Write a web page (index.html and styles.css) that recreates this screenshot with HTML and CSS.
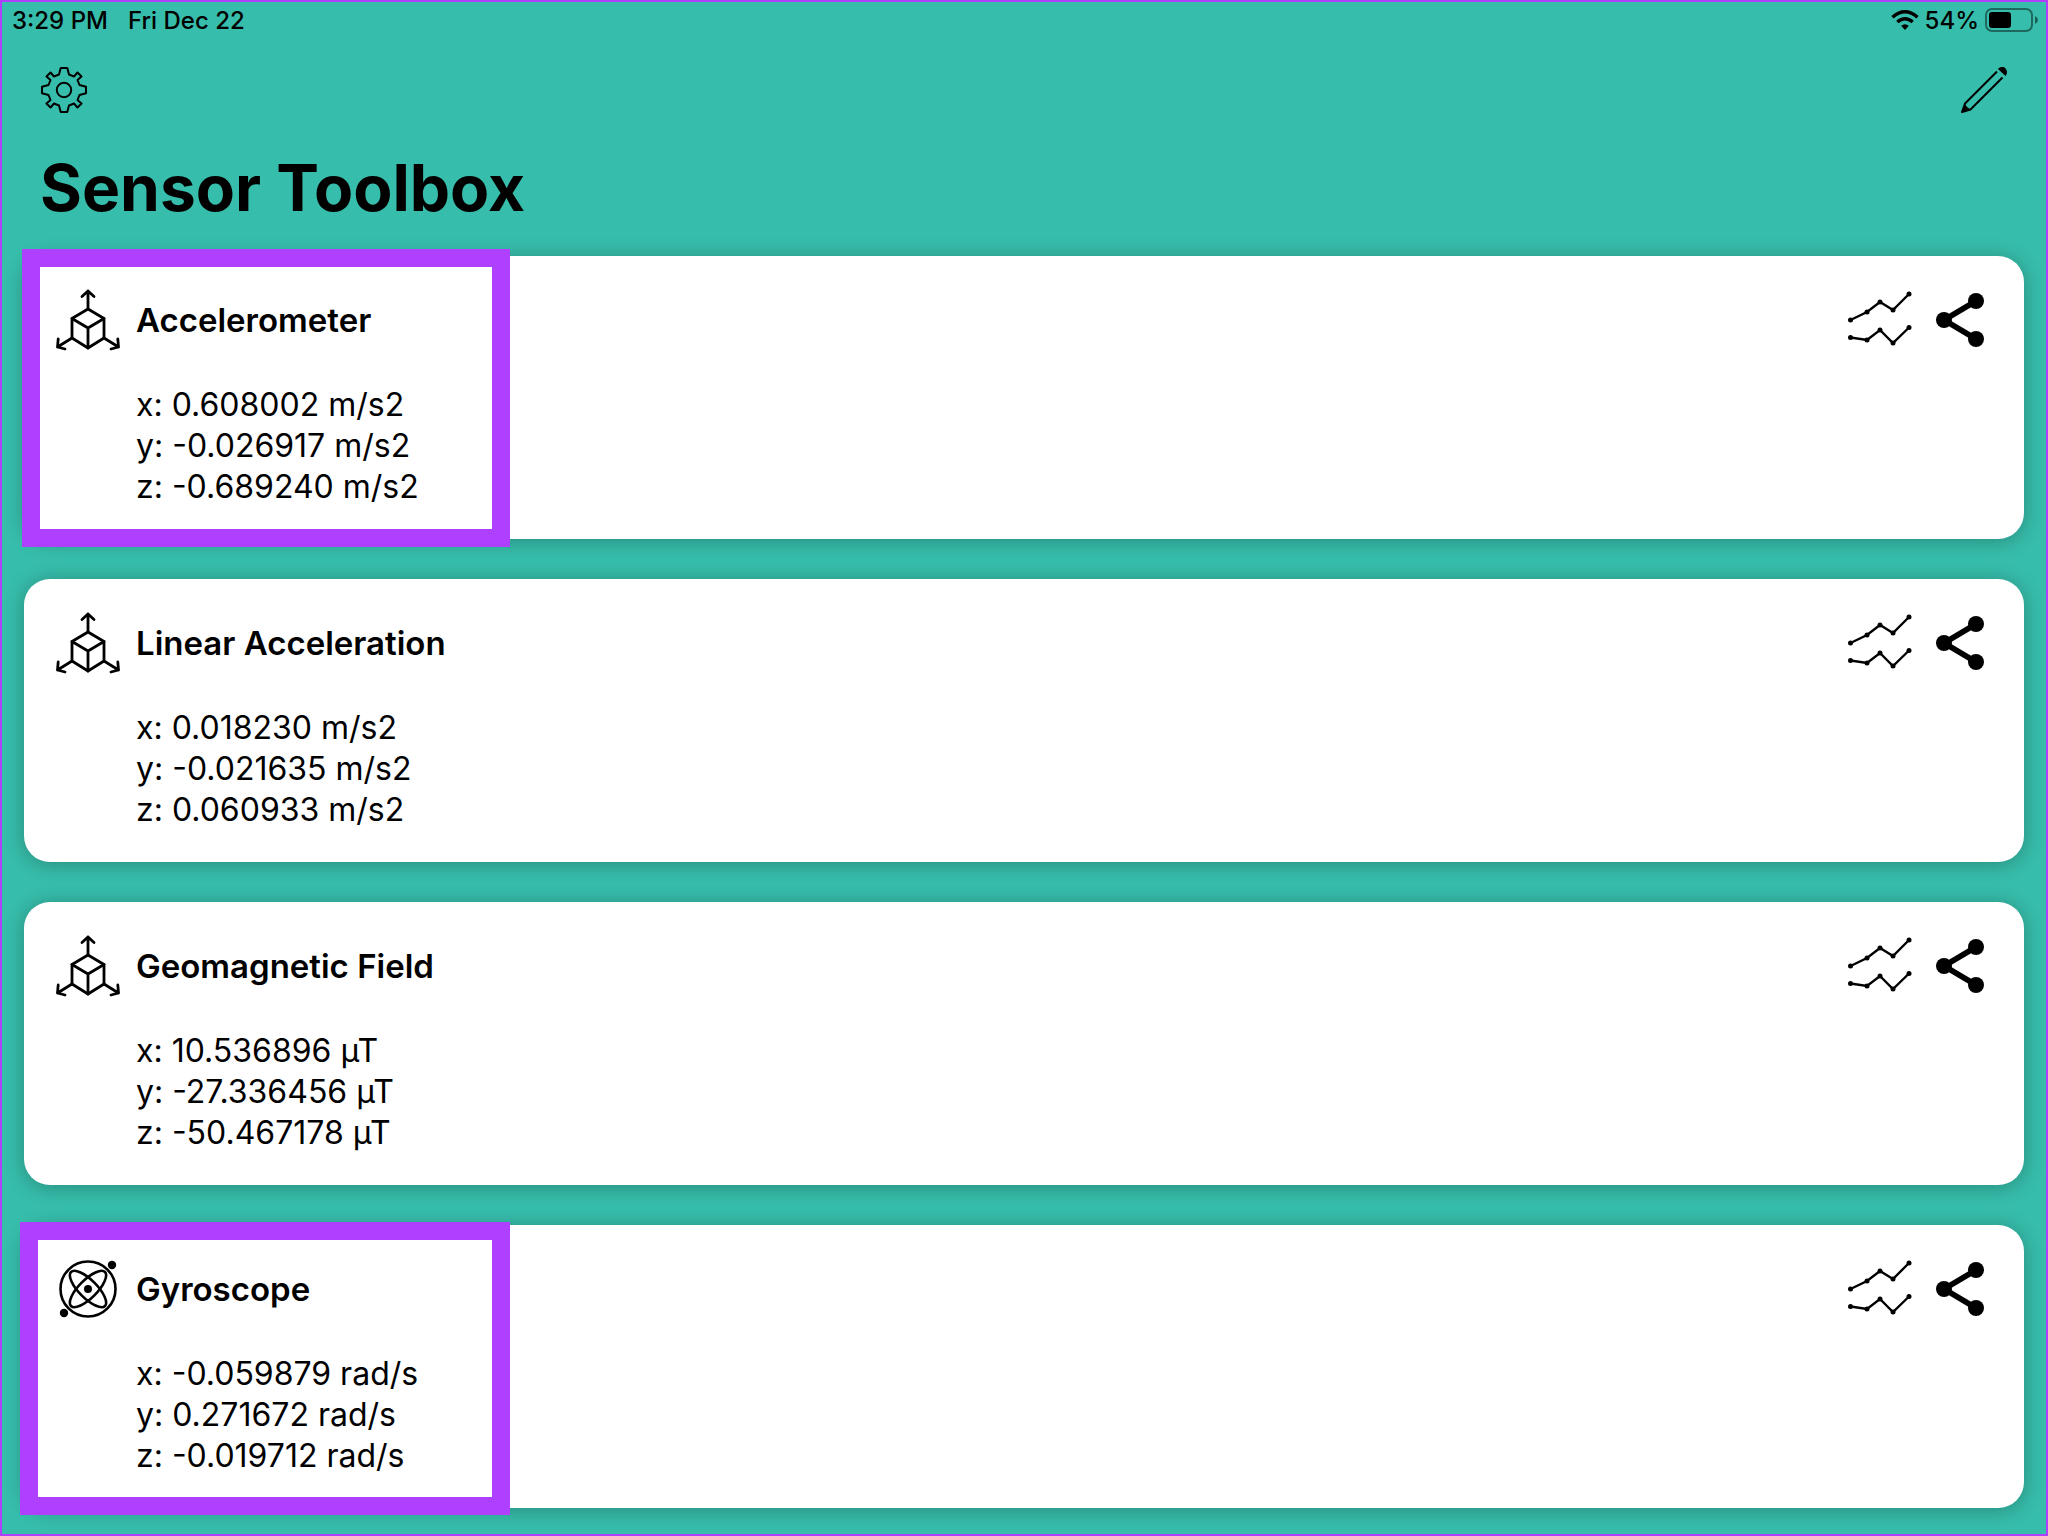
FILE: index.html
```
<!DOCTYPE html>
<html lang="en">

<head>
    <meta charset="UTF-8" />
    <meta name="viewport" content="width=device-width, initial-scale=1.0" />
    <title>Sensor Toolbox</title>
    <link rel="stylesheet" href="styles.css">
</head>

<body>
    <!-- Shared icons -->
    <svg class="sprite" aria-hidden="true">
        <symbol id="icon-axes" viewBox="0 0 64 64">
            <g fill="none" stroke="currentColor" stroke-width="2.8" stroke-linejoin="round" stroke-linecap="round">
                <path d="M32 21 L48 30.5 V50 L32 60 L16 50 V30.5 Z" />
                <path d="M16 30.5 L32 40 L48 30.5 M32 40 V60" />
                <path d="M32 21 V3 M26 8.5 L32 3 L38 8.5" />
                <path d="M16 50 L1.5 59 M2.2 51 L1.5 59 L9 61" />
                <path d="M48 50 L62.5 59 M61.8 51 L62.5 59 L55 61" />
            </g>
        </symbol>
        <symbol id="icon-gyro" viewBox="0 0 64 64">
            <g fill="none" stroke="currentColor" stroke-width="2.6">
                <circle cx="32" cy="32" r="27.5" />
                <ellipse cx="32" cy="32" rx="24" ry="9" transform="rotate(45 32 32)" />
                <ellipse cx="32" cy="32" rx="24" ry="9" transform="rotate(-45 32 32)" />
            </g>
            <circle cx="32" cy="32" r="4" />
            <circle cx="56" cy="8" r="4.2" />
            <circle cx="8" cy="56" r="4.2" />
        </symbol>
        <symbol id="icon-chart" viewBox="0 0 64 64">
            <g fill="none" stroke="currentColor" stroke-width="2.4">
                <path d="M2.5 32 L19 24 L32 14 L45 22 L61 6" />
                <path d="M2.5 49.5 L19 52 L32 42 L45 55 L61 39.5" />
            </g>
            <circle cx="2.5" cy="32" r="2.5" />
            <circle cx="19" cy="24" r="2.5" />
            <circle cx="32" cy="14" r="2.5" />
            <circle cx="45" cy="22" r="2.5" />
            <circle cx="61" cy="6" r="2.5" />
            <circle cx="2.5" cy="49.5" r="2.5" />
            <circle cx="19" cy="52" r="2.5" />
            <circle cx="32" cy="42" r="2.5" />
            <circle cx="45" cy="55" r="2.5" />
            <circle cx="61" cy="39.5" r="2.5" />
        </symbol>
        <symbol id="icon-share" viewBox="0 0 64 64">
            <path d="M48 13 L16 32 L48 51" fill="none" stroke="currentColor" stroke-width="5.6" />
            <circle cx="16" cy="32" r="8" />
            <circle cx="48" cy="13" r="8" />
            <circle cx="48" cy="51" r="8" />
        </symbol>
    </svg>

    <div class="app">
        <div class="status-bar">
            <span>3:29 PM</span>
            <span>Fri Dec 22</span>
            <div class="status-right">
                <svg width="28" height="20" viewBox="0 0 28 20" aria-label="Wi-Fi">
                    <g fill="none" stroke="currentColor" stroke-width="3.4">
                        <path d="M1.5 7.2 Q14 -3.6 26.5 7.2" />
                        <path d="M6.3 12 Q14 5.4 21.7 12" />
                    </g>
                    <path d="M10.2 15.8 Q14 12.6 17.8 15.8 L14 20 Z" />
                </svg>
                <span>54%</span>
                <svg width="55" height="24" viewBox="1 0 55 24" aria-label="Battery">
                    <rect class="battery-shell" x="2" y="1" width="46" height="22" rx="6" />
                    <rect x="5" y="4" width="22" height="16" rx="3" />
                    <path class="battery-tip" d="M51 8 Q54 9.5 54 12 Q54 14.5 51 16 Z" />
                </svg>
            </div>
        </div>

        <header>
            <div class="toolbar">
                <button type="button" aria-label="Settings">
                    <svg width="48" height="48" viewBox="0 0 48 48">
                        <g fill="none" stroke="currentColor" stroke-width="2" stroke-linejoin="round">
                            <path d="M20.7 2 H27.3 L29 8.5 L34 10.5 L37.5 6.5 L41.5 10.5 L37.5 14 L39.5 19 L46 20.7 V27.3 L39.5 29 L37.5 34 L41.5 37.5 L37.5 41.5 L34 37.5 L29 39.5 L27.3 46 H20.7 L19 39.5 L14 37.5 L10.5 41.5 L6.5 37.5 L10.5 34 L8.5 29 L2 27.3 V20.7 L8.5 19 L10.5 14 L6.5 10.5 L10.5 6.5 L14 10.5 L19 8.5 Z" />
                            <circle cx="24" cy="24" r="7.2" />
                        </g>
                    </svg>
                </button>
                <button type="button" aria-label="Edit">
                    <svg width="48" height="48" viewBox="0 0 48 48">
                        <path d="M37 5.5 L5 37.5 L2 46 L10.5 43.5 L42.5 11.5" fill="none" stroke="currentColor" stroke-width="2" stroke-linejoin="round" />
                        <path d="M5 38 L7 41 L10.5 43.5 L1.5 46.5 Z" />
                        <path d="M38 3 C40 0.5 44 0.5 45.5 2.5 C47.5 4.5 47.5 7.5 45.5 10 Z" />
                    </svg>
                </button>
            </div>
            <h1>Sensor Toolbox</h1>
        </header>

        <main>
            <section class="card highlight highlight-first">
                <div class="card-header">
                    <svg class="icon"><use href="#icon-axes" /></svg>
                    <h2>Accelerometer</h2>
                    <button type="button" aria-label="Show chart"><svg class="icon"><use href="#icon-chart" /></svg></button>
                    <button type="button" aria-label="Share"><svg class="icon"><use href="#icon-share" /></svg></button>
                </div>
                <ul>
                    <li>x: 0.608002 m/s2</li>
                    <li>y: -0.026917 m/s2</li>
                    <li>z: -0.689240 m/s2</li>
                </ul>
            </section>

            <section class="card">
                <div class="card-header">
                    <svg class="icon"><use href="#icon-axes" /></svg>
                    <h2>Linear Acceleration</h2>
                    <button type="button" aria-label="Show chart"><svg class="icon"><use href="#icon-chart" /></svg></button>
                    <button type="button" aria-label="Share"><svg class="icon"><use href="#icon-share" /></svg></button>
                </div>
                <ul>
                    <li>x: 0.018230 m/s2</li>
                    <li>y: -0.021635 m/s2</li>
                    <li>z: 0.060933 m/s2</li>
                </ul>
            </section>

            <section class="card">
                <div class="card-header">
                    <svg class="icon"><use href="#icon-axes" /></svg>
                    <h2>Geomagnetic Field</h2>
                    <button type="button" aria-label="Show chart"><svg class="icon"><use href="#icon-chart" /></svg></button>
                    <button type="button" aria-label="Share"><svg class="icon"><use href="#icon-share" /></svg></button>
                </div>
                <ul>
                    <li>x: 10.536896 µT</li>
                    <li>y: -27.336456 µT</li>
                    <li>z: -50.467178 µT</li>
                </ul>
            </section>

            <section class="card highlight highlight-last">
                <div class="card-header">
                    <svg class="icon"><use href="#icon-gyro" /></svg>
                    <h2>Gyroscope</h2>
                    <button type="button" aria-label="Show chart"><svg class="icon"><use href="#icon-chart" /></svg></button>
                    <button type="button" aria-label="Share"><svg class="icon"><use href="#icon-share" /></svg></button>
                </div>
                <ul>
                    <li>x: -0.059879 rad/s</li>
                    <li>y: 0.271672 rad/s</li>
                    <li>z: -0.019712 rad/s</li>
                </ul>
            </section>
        </main>
    </div>
</body>

</html>
```
FILE: styles.css
```
*,
*::after {
    box-sizing: border-box;
}

body {
    font-family: Inter, 'Liberation Sans', sans-serif;
    background: #37bdab;
    color: #000;
    margin: 0;
}

h1,
h2,
ul {
    margin: 0;
    padding: 0;
}

svg {
    display: block;
    fill: currentColor;
}

button {
    padding: 0;
    border: none;
    background: none;
    color: inherit;
    cursor: pointer;
}

.sprite {
    display: none;
}

.app {
    min-height: 100vh;
    border: 2px solid #b040ff;
}

.status-bar {
    display: flex;
    align-items: center;
    gap: 20px;
    height: 36px;
    padding: 0 6px 0 10px;
    font-size: 24px;
    font-weight: 500;
}

.status-right {
    display: flex;
    align-items: center;
    gap: 6px;
    margin-left: auto;
}

.battery-shell {
    fill: none;
    stroke: #000;
    stroke-width: 2;
    opacity: 0.45;
}

.battery-tip {
    opacity: 0.5;
}

header {
    padding: 28px 38px;
}

.toolbar {
    display: flex;
    justify-content: space-between;
    margin-bottom: 34px;
}

h1 {
    font-size: 64px;
    font-weight: 700;
    line-height: 80px;
}

main {
    display: flex;
    flex-direction: column;
    gap: 40px;
    padding: 0 22px 26px;
}

.card {
    position: relative;
    padding: 32px;
    background: #fff;
    border-radius: 26px;
    box-shadow: 0 2px 20px rgba(0, 0, 0, 0.28);
}

.card-header {
    display: flex;
    align-items: center;
    gap: 16px;
    margin-bottom: 32px;
}

.icon {
    width: 64px;
    height: 64px;
}

h2 {
    flex: 1;
    font-size: 33px;
    font-weight: 600;
}

ul {
    list-style-type: none;
    margin-left: 80px;
    font-size: 32px;
    line-height: 41px;
}

/* Purple frame drawn over the left part of a card */
.highlight::after {
    content: '';
    position: absolute;
    border: 18px solid #b040ff;
    pointer-events: none;
}

.highlight-first::after {
    top: -7px;
    bottom: -8px;
    left: -2px;
    width: 488px;
}

.highlight-last::after {
    top: -3px;
    bottom: -7px;
    left: -4px;
    width: 490px;
}
```
